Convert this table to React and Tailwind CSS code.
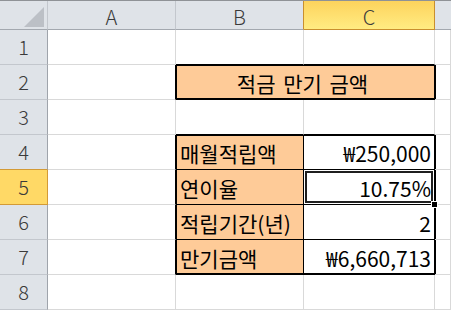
import React from 'react';
import clsx from 'clsx';

const FONT = { fontFamily: '"Noto Sans CJK KR", "Noto Sans", sans-serif' };

const COLS = ['A', 'B', 'C'];

// rows 4..7 of the savings table
const ROWS = [
  { n: 4, label: '매월적립액', value: '₩250,000' },
  { n: 5, label: '연이율', value: '10.75%', active: true },
  { n: 6, label: '적립기간(년)', value: '2' },
  { n: 7, label: '만기금액', value: '₩6,660,713' },
];

function RowHead({ n, selected, prevSelected }) {
  return (
    <div
      className={clsx(
        'h-[35px] flex items-center justify-center border-r border-b text-[20px] font-light text-[#3a3a3a]',
        selected ? 'bg-[#ffd966] border-[#d39a36]' : 'bg-[#dfe3e8] border-r-[#9fa4ab] border-b-[#c3c7cd]',
        prevSelected && 'border-b-[#d39a36]'
      )}
    >
      {n}
    </div>
  );
}

function Cell({ className, children }) {
  return <div className={clsx('h-[35px] border-r border-b border-[#d9d9d9]', className)}>{children}</div>;
}

export default function App() {
  return (
    <div className="w-[451px] h-[310px] overflow-hidden bg-white border-t border-[#8f9296]" style={FONT}>
      <div className="grid grid-cols-[48px_128px_128px_131px_1fr]">
        {/* column headers */}
        <div className="h-[29px] bg-[#dfe3e8] border-r border-b border-r-[#c3c7cd] border-b-[#a3a8af] flex items-end justify-end pr-[3px] pb-[2px]">
          <svg width="20" height="20" viewBox="0 0 20 20">
            <polygon points="20,0 20,20 0,20" fill="#bcc0c6" />
          </svg>
        </div>
        {COLS.map(c => (
          <div
            key={c}
            className={clsx(
              'h-[29px] flex items-center justify-center pt-[3px] border-r border-b text-[20px] font-light text-[#3a3a3a]',
              c === 'C'
                ? 'bg-linear-to-b from-[#fdd35c] to-[#ffec82] border-[#c98f2e]'
                : 'bg-[#dfe3e8] border-r-[#c3c7cd] border-b-[#a3a8af]',
              c === 'B' && 'border-r-[#c98f2e]'
            )}
          >
            {c}
          </div>
        ))}
        <div className="h-[29px] bg-[#dfe3e8] border-b border-[#a3a8af]" />

        {/* row 1 */}
        <RowHead n={1} />
        <Cell />
        <Cell className="border-b-black" />
        <Cell className="border-b-black" />
        <Cell />

        {/* row 2: merged title */}
        <RowHead n={2} />
        <Cell className="border-r-black" />
        <div className="col-span-2 h-[35px] bg-[#fecb98] border-r border-b border-black shadow-[inset_1px_1px_0_#000,inset_0_-1px_0_#000] flex items-end justify-center pb-[5px] pr-[5px]">
          <span className="text-[21px] leading-none text-black [word-spacing:3px]">적금 만기 금액</span>
        </div>
        <Cell className="shadow-[inset_1px_0_0_#000]" />

        {/* row 3 */}
        <RowHead n={3} />
        <Cell />
        <Cell className="border-b-black" />
        <Cell className="border-b-black" />
        <Cell />

        {/* rows 4-7 */}
        {ROWS.map((r, i) => {
          const last = i === ROWS.length - 1;
          const first = i === 0;
          return (
            <React.Fragment key={r.n}>
              <RowHead n={r.n} selected={r.active} prevSelected={ROWS[i + 1]?.active} />
              <Cell className="border-r-black" />
              <Cell
                className={clsx(
                  'bg-[#fecb98] border-black flex items-end pl-[4px] pb-[5px]',
                  first ? 'shadow-[inset_1px_1px_0_#000]' : last ? 'shadow-[inset_1px_-1px_0_#000]' : 'shadow-[inset_1px_0_0_#000]'
                )}
              >
                <span className="text-[21px] leading-none text-black whitespace-nowrap">{r.label}</span>
              </Cell>
              <Cell
                className={clsx(
                  'relative bg-white border-black flex items-end justify-end pr-[3px] pb-[5px]',
                  r.active && 'shadow-[inset_0_0_0_1px_#ffffff,inset_0_0_0_3px_#1f1f1f]',
                  !r.active && first && 'shadow-[inset_0_1px_0_#000]',
                  !r.active && last && 'shadow-[inset_0_-1px_0_#000]'
                )}
              >
                <span className="text-[21px] leading-none text-black whitespace-nowrap">{r.value}</span>
                {r.active && (
                  <span className="absolute -right-[4px] -bottom-[4px] w-[7px] h-[7px] bg-black border border-white z-10" />
                )}
              </Cell>
              <Cell className="shadow-[inset_1px_0_0_#000]" />
            </React.Fragment>
          );
        })}

        {/* row 8 */}
        <RowHead n={8} />
        <Cell />
        <Cell />
        <Cell />
        <Cell />
      </div>
    </div>
  );
}
